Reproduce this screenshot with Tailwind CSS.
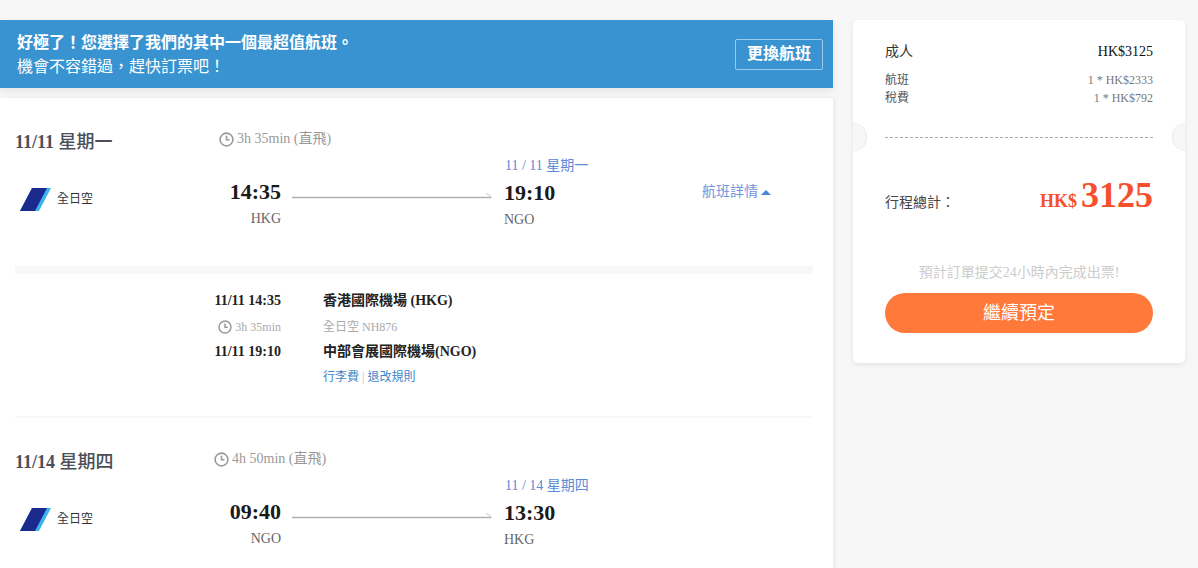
<!DOCTYPE html>
<html lang="zh-Hant">
<head>
    <meta charset="UTF-8" />
    <title>航班預定</title>
    <script src="https://cdn.jsdelivr.net/npm/@tailwindcss/browser@4"></script>
</head>
<body class="bg-[#f7f7f7] h-[568px] overflow-hidden font-['Liberation_Serif','Noto_Sans_CJK_TC',serif]">
    <div class="flex items-start pt-5">
        <!-- left column -->
        <div class="w-[833px] shrink-0">
            <div class="h-[68px] bg-[#3993d0] shadow-[0_3px_8px_rgba(0,0,0,0.08)] pl-[17px] pr-[10px] flex items-center justify-between text-white">
                <div class="pt-[2px]">
                    <p class="text-base font-bold leading-6">好極了！您選擇了我們的其中一個最超值航班。</p>
                    <p class="text-base leading-6">機會不容錯過，趕快訂票吧！</p>
                </div>
                <button class="w-[88px] h-[31px] border border-white/50 rounded-[2px] text-base font-bold">更換航班</button>
            </div>

            <div class="mt-[10px] bg-white h-[480px] overflow-hidden shadow-[2px_0_4px_rgba(0,0,0,0.05)] pl-[15px] pr-[20px]">
                <!-- segment 1 -->
                <div class="pt-[32px] h-[320px] border-b-2 border-[#f7f7f7]">
                    <div class="flex h-[24px]">
                        <p class="w-[204px] text-[18px] leading-6 font-bold text-[#4a4f5a]">11/11 <span class="font-medium">星期一</span></p>
                        <div class="flex items-center gap-[3px] h-[18px] text-sm text-[#999]">
                            <svg class="w-[15px] h-[15px]" viewBox="0 0 15 15" fill="none" stroke="#999" stroke-width="1.6"><circle cx="7.5" cy="7.5" r="6.4"/><path d="M7.5 3.8v4h3"/></svg>
                            <span>3h 35min (直飛)</span>
                        </div>
                    </div>
                    <div class="flex items-start mt-[3px]">
                        <div class="w-[200px] pt-[30px] flex items-center gap-[6px] pl-[4px]">
                            <svg class="w-[32px] h-[24px] shrink-0" viewBox="0 0 32 24"><path d="M13 1h19L20 24H1z" fill="#3cb4f0"/><path d="M13 1h15L16 24H1z" fill="#1b2a8c"/></svg>
                            <span class="text-xs text-[#333]">全日空</span>
                        </div>
                        <div class="w-[66px] pt-[22px] text-right">
                            <p class="text-[22px] leading-[26px] font-bold text-[#1a1a1a]">14:35</p>
                            <p class="text-sm leading-[20px] mt-[4px] text-[#666]">HKG</p>
                        </div>
                        <svg class="ml-[11px] mt-[32px] w-[201px] h-[10px] shrink-0" viewBox="0 0 201 10" fill="none"><path d="M0 8.5h199" stroke="#b0b0b0" stroke-width="1.5"/><path d="M200 8.5L194 4" stroke="#c8c8c8"/></svg>
                        <div class="ml-[11px] w-[198px]">
                            <p class="pl-[1px] text-sm leading-[18px] text-[#5c8ad8]">11 / 11 星期一</p>
                            <p class="text-[22px] leading-[26px] mt-[5px] font-bold text-[#1a1a1a]">19:10</p>
                            <p class="text-sm leading-[20px] mt-[4px] text-[#666]">NGO</p>
                        </div>
                        <div class="flex items-center gap-[3px] mt-[25px] text-sm leading-5 text-[#6f95dd]">
                            <span>航班詳情</span>
                            <span class="w-0 h-0 border-x-[5px] border-x-transparent border-b-[5px] border-b-[#4a86d8]"></span>
                        </div>
                    </div>

                    <div class="h-2 bg-[#f7f7f7] mt-[36px]"></div>

                    <!-- detail -->
                    <div class="grid grid-cols-[266px_1fr] gap-x-[42px] mt-[17px] text-sm">
                        <p class="leading-[20px] text-right font-bold text-[#222]">11/11 14:35</p>
                        <p class="leading-[20px] font-bold text-[#222]">香港國際機場 (HKG)</p>
                        <div class="mt-[6px] flex items-center justify-end gap-[3px] text-xs leading-[20px] text-[#aaa]">
                            <svg class="w-[14px] h-[14px]" viewBox="0 0 15 15" fill="none" stroke="#999" stroke-width="1.6"><circle cx="7.5" cy="7.5" r="6.4"/><path d="M7.5 3.8v4h3"/></svg>
                            <span>3h 35min</span>
                        </div>
                        <p class="mt-[6px] text-xs leading-[20px] text-[#aaa]">全日空 NH876</p>
                        <p class="mt-[5px] leading-[20px] text-right font-bold text-[#222]">11/11 19:10</p>
                        <p class="mt-[5px] leading-[20px] font-bold text-[#222]">中部會展國際機場(NGO)</p>
                        <span></span>
                        <p class="mt-[5px] text-xs leading-[20px] text-[#3f86c8]">行李費 <span class="text-[#bbb]">|</span> 退改規則</p>
                    </div>
                </div>

                <!-- segment 2 -->
                <div class="pt-[32px]">
                    <div class="flex h-[24px]">
                        <p class="w-[199px] text-[18px] leading-6 font-bold text-[#4a4f5a]">11/14 <span class="font-medium">星期四</span></p>
                        <div class="flex items-center gap-[3px] h-[18px] text-sm text-[#999]">
                            <svg class="w-[15px] h-[15px]" viewBox="0 0 15 15" fill="none" stroke="#999" stroke-width="1.6"><circle cx="7.5" cy="7.5" r="6.4"/><path d="M7.5 3.8v4h3"/></svg>
                            <span>4h 50min (直飛)</span>
                        </div>
                    </div>
                    <div class="flex items-start mt-[3px]">
                        <div class="w-[200px] pt-[30px] flex items-center gap-[6px] pl-[4px]">
                            <svg class="w-[32px] h-[24px] shrink-0" viewBox="0 0 32 24"><path d="M13 1h19L20 24H1z" fill="#3cb4f0"/><path d="M13 1h15L16 24H1z" fill="#1b2a8c"/></svg>
                            <span class="text-xs text-[#333]">全日空</span>
                        </div>
                        <div class="w-[66px] pt-[22px] text-right">
                            <p class="text-[22px] leading-[26px] font-bold text-[#1a1a1a]">09:40</p>
                            <p class="text-sm leading-[20px] mt-[4px] text-[#666]">NGO</p>
                        </div>
                        <svg class="ml-[11px] mt-[32px] w-[201px] h-[10px] shrink-0" viewBox="0 0 201 10" fill="none"><path d="M0 8.5h199" stroke="#b0b0b0" stroke-width="1.5"/><path d="M200 8.5L194 4" stroke="#c8c8c8"/></svg>
                        <div class="ml-[11px] w-[198px]">
                            <p class="pl-[1px] text-sm leading-[18px] text-[#5c8ad8]">11 / 14 星期四</p>
                            <p class="text-[22px] leading-[26px] mt-[5px] font-bold text-[#1a1a1a]">13:30</p>
                            <p class="text-sm leading-[20px] mt-[4px] text-[#666]">HKG</p>
                        </div>
                    </div>
                </div>
            </div>
        </div>

        <!-- price card -->
        <div class="relative ml-5 w-[332px] h-[343px] bg-white rounded-[5px] shadow-[0_2px_5px_rgba(0,0,0,0.08)] px-8 pt-[22px] overflow-hidden">
            <span class="absolute left-[-12px] top-[103px] w-[26px] h-[28px] rounded-full bg-[#f7f7f7] shadow-[inset_-1px_0_2px_rgba(0,0,0,0.05)]"></span>
            <span class="absolute right-[-13px] top-[103px] w-[26px] h-[28px] rounded-full bg-[#f7f7f7] shadow-[inset_1px_0_2px_rgba(0,0,0,0.05)]"></span>
            <div class="flex justify-between text-sm leading-5 text-[#333]">
                <span>成人</span>
                <span class="text-[#111]">HK$3125</span>
            </div>
            <div class="flex justify-between mt-[9px] text-xs leading-[18px] text-[#777]">
                <span class="text-[#555]">航班</span>
                <span>1 * HK$2333</span>
            </div>
            <div class="flex justify-between text-xs leading-[18px] text-[#777]">
                <span class="text-[#555]">稅費</span>
                <span>1 * HK$792</span>
            </div>
            <div class="border-t border-dashed border-[#aaa] mt-[30px]"></div>
            <div class="flex justify-between items-baseline mt-[35px]">
                <span class="text-sm text-[#444]">行程總計：</span>
                <span class="font-bold text-[#f5502c] leading-[44px]"><span class="text-[18px]">HK$</span> <span class="text-[36px]">3125</span></span>
            </div>
            <p class="text-center text-sm leading-5 text-[#ccc] mt-[39px]">預計訂單提交24小時內完成出票!</p>
            <button class="w-full h-10 mt-[10px] rounded-full bg-[#ff7a3a] text-white text-lg">繼續預定</button>
        </div>
    </div>
</body>
</html>
